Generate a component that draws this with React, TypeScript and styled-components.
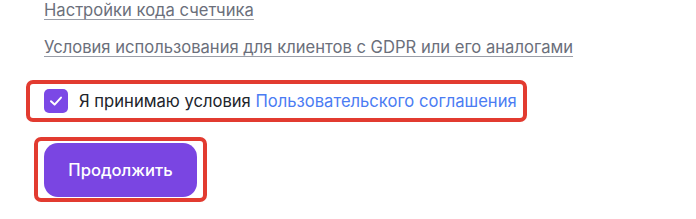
import styled, { createGlobalStyle } from "styled-components";
import { useState } from "react";

const GlobalStyle = createGlobalStyle`
  body {
    margin: 0;
    background: #ffffff;
    font-family: "Inter", "Noto Sans", sans-serif;
  }
`;

export default function App() {
  const [accepted, setAccepted] = useState(true);

  const LINKS = [
    "Настройки кода счетчика",
    "Условия использования для клиентов с GDPR или его аналогами",
  ];

  return (
    <>
      <GlobalStyle />
      <Page>
        <LinkList>
          {LINKS.map((text) => (
            <DocLink key={text} href="#">
              {text}
            </DocLink>
          ))}
        </LinkList>
        <Highlight $offset={18} $pad="5px 6px 5px 14px">
          <AgreeRow>
            <Checkbox
              type="button"
              $checked={accepted}
              onClick={() => setAccepted(!accepted)}
              aria-label="Я принимаю условия"
            >
              {accepted && (
                <svg width="16" height="16" viewBox="0 0 16 16" fill="none">
                  <path
                    d="M3 8.2 L6.6 11.6 L13 4.6"
                    stroke="#ffffff"
                    strokeWidth="2"
                    strokeLinecap="round"
                    strokeLinejoin="round"
                  />
                </svg>
              )}
            </Checkbox>
            <AgreeText>
              Я принимаю условия <AgreeLink href="#">Пользовательского соглашения</AgreeLink>
            </AgreeText>
          </AgreeRow>
        </Highlight>
        <Highlight $offset={10} $pad="2px 6px 1px 6px">
          <ContinueButton type="button">Продолжить</ContinueButton>
        </Highlight>
      </Page>
    </>
  );
}

const Page = styled.div`
  display: flex;
  flex-direction: column;
  align-items: flex-start;
  padding: 0 0 0 44px;
`;

const LinkList = styled.div`
  display: flex;
  flex-direction: column;
  gap: 16px;
`;

const DocLink = styled.a`
  color: #6b6f7b;
  font-size: 16.6px;
  line-height: 21px;
  text-decoration: underline;
  text-decoration-color: #9a9ea8;
  text-underline-offset: 3px;
`;

const Highlight = styled.div<{ $offset: number; $pad: string }>`
  display: inline-flex;
  margin-left: -${(p) => p.$offset}px;
  margin-top: 22px;
  border: 4px solid #e23b30;
  border-radius: 7px;
  padding: ${(p) => p.$pad};
  & + & {
    margin-top: 15px;
  }
`;

const AgreeRow = styled.label`
  display: flex;
  align-items: center;
  gap: 11px;
`;

const Checkbox = styled.button<{ $checked: boolean }>`
  display: flex;
  align-items: center;
  justify-content: center;
  width: 24px;
  height: 24px;
  padding: 0;
  border: none;
  border-radius: 5px;
  background: ${(p) => (p.$checked ? "#7b48e6" : "#ffffff")};
  box-shadow: ${(p) => (p.$checked ? "none" : "inset 0 0 0 1px #c4c6cc")};
  cursor: pointer;
`;

const AgreeText = styled.span`
  color: #21242b;
  font-size: 16.6px;
  line-height: 24px;
`;

const AgreeLink = styled.a`
  color: #4b7cf3;
  text-decoration: none;
`;

const ContinueButton = styled.button`
  width: 153px;
  height: 54px;
  border: none;
  border-radius: 14px;
  background: #7a45e2;
  color: #ffffff;
  font-family: "Inter", "Noto Sans", sans-serif;
  font-size: 16.6px;
  font-weight: 500;
  cursor: pointer;
`;
